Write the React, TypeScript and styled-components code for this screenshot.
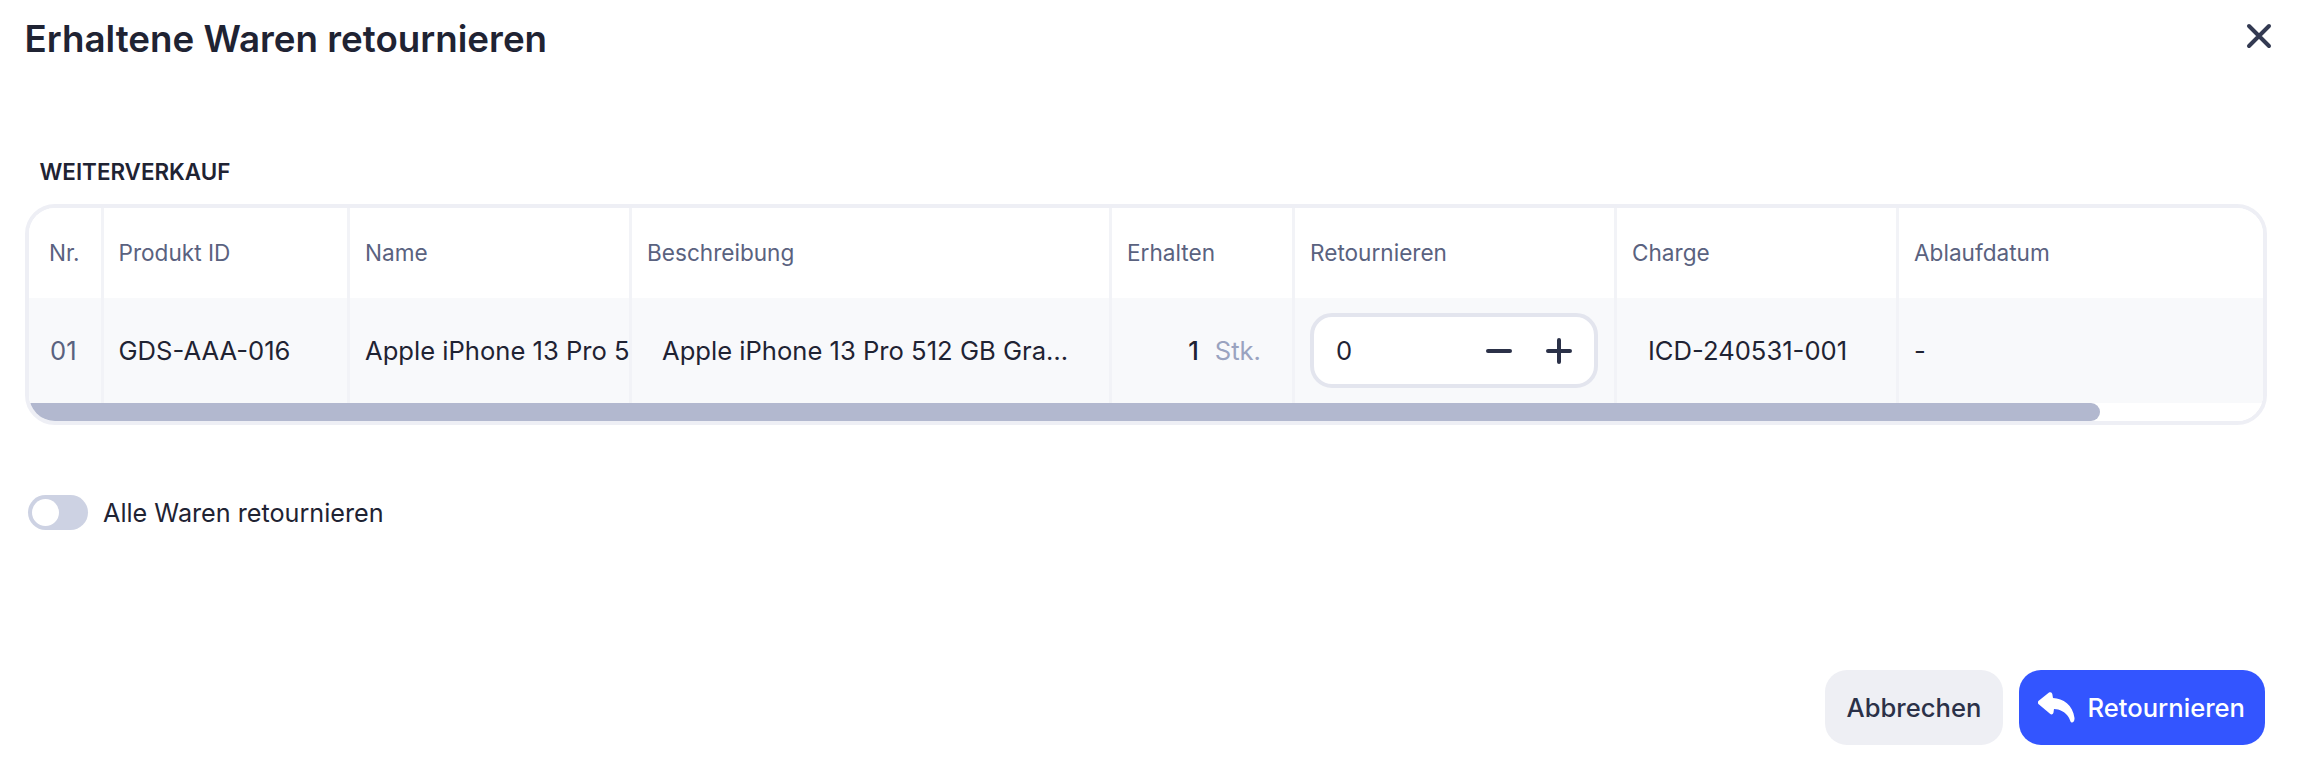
import React from "react";
import styled, { createGlobalStyle } from "styled-components";

const Global = createGlobalStyle`
  html, body { margin: 0; padding: 0; background: #fff; }
  body { font-family: Inter, "Liberation Sans", sans-serif; color: #1f2333; }
  * { box-sizing: border-box; }
`;

const Modal = styled.div`
  height: 766px;
  display: flex;
  flex-direction: column;
  padding: 0 37px 21px 25px;
`;
const Header = styled.header`
  height: 77px;
  display: flex;
  align-items: center;
  justify-content: space-between;
`;
const Title = styled.h1`
  margin: 0 0 0 -0.5px;
  font-size: 36.75px;
  font-weight: 600;
  color: #1f2333;
`;
const Close = styled.button`
  all: unset;
  width: 32px;
  height: 32px;
  margin: 0 -7.5px 6px 0;
  color: #333a52;
  display: flex;
  align-items: center;
  justify-content: center;
`;
const Section = styled.h2`
  margin: 79px 0 0 14.5px;
  height: 32px;
  line-height: 32px;
  font-size: 22.4px;
  font-weight: 600;
  color: #1f2333;
`;
const Frame = styled.div`
  margin-top: 16px;
  border: 4px solid #eeeff5;
  border-radius: 30px;
  overflow: hidden;
`;
const Scroller = styled.div`
  overflow: hidden;
`;
const Grid = styled.div`
  display: grid;
  width: 2412px;
  grid-template-columns: 74.5px 246.5px 282px 480px 183px 322px 282px 542px;
  grid-template-rows: 90px 105px;
`;
const Cell = styled.div<{ $pad?: number; $last?: boolean }>`
  display: flex;
  align-items: center;
  min-width: 0;
  padding: 0 0 0 ${(p) => p.$pad ?? 15}px;
  border-right: ${(p) => (p.$last ? "0" : "3.5px solid #f2f3f7")};
  white-space: nowrap;
  overflow: hidden;
`;
const HeadCell = styled(Cell)`
  font-size: 22.6px;
  color: #5a627f;
  background: #fff;
  padding-bottom: 2px;
`;
const BodyCell = styled(Cell)`
  font-size: 25.6px;
  color: #1f2333;
  background: #f8f9fb;
`;
const Faint = styled.span`
  color: #5a627f;
  margin-left: 1px;
`;
const Ellipsis = styled.span`
  display: block;
  width: 416px;
  overflow: hidden;
  text-overflow: ellipsis;
`;
const Qty = styled.div`
  width: 100%;
  display: flex;
  justify-content: flex-end;
  align-items: baseline;
  gap: 16px;
  padding-right: 31px;
`;
const Number1 = styled.span`
  font-weight: 500;
`;
const Unit = styled.span`
  color: #9aa3c0;
`;
const Stepper = styled.div`
  width: 288px;
  height: 75px;
  border: 4px solid #e3e5ee;
  border-radius: 22px;
  background: #fff;
  display: flex;
  align-items: center;
  padding: 0 20px 0 22px;
  font-size: 25.6px;
`;
const StepValue = styled.span`
  flex: 1;
`;
const StepButton = styled.button`
  all: unset;
  width: 30px;
  height: 30px;
  margin-left: 30px;
  color: #2b3148;
  display: flex;
  align-items: center;
  justify-content: center;
`;
const ScrollTrack = styled.div`
  height: 18px;
  background: #fff;
`;
const ScrollThumb = styled.div`
  width: 2071px;
  height: 100%;
  background: #b2b8cf;
  border-radius: 0 9px 9px 0;
`;
const ToggleRow = styled.label`
  margin: 70px 0 0 3px;
  display: flex;
  align-items: center;
  gap: 15px;
  font-size: 25.2px;
  color: #1f2333;
`;
const Track = styled.span`
  width: 60px;
  height: 35px;
  border-radius: 18px;
  background: #cdd2e3;
  padding: 4px;
  display: block;
`;
const Knob = styled.span`
  display: block;
  width: 27px;
  height: 27px;
  border-radius: 50%;
  background: #fff;
`;
const Footer = styled.footer`
  margin-top: auto;
  margin-right: 2px;
  display: flex;
  justify-content: flex-end;
  gap: 15.5px;
`;
const Button = styled.button<{ $primary?: boolean }>`
  all: unset;
  height: 75px;
  border-radius: 22px;
  display: flex;
  align-items: center;
  justify-content: center;
  gap: 12px;
  font-size: 25.6px;
  font-weight: 450;
  background: ${(p) => (p.$primary ? "#3355ff" : "#eeeff4")};
  color: ${(p) => (p.$primary ? "#fff" : "#2b3148")};
  width: ${(p) => (p.$primary ? 246.5 : 178)}px;
`;

const X = () => (
  <svg width="32" height="32" viewBox="0 0 32 32" fill="none" stroke="currentColor" strokeWidth="4" strokeLinecap="round">
    <path d="M6 6l20 20M26 6L6 26" />
  </svg>
);
const Minus = () => (
  <svg width="30" height="30" viewBox="0 0 30 30" fill="none" stroke="currentColor" strokeWidth="4" strokeLinecap="round">
    <path d="M4 15h22" />
  </svg>
);
const Plus = () => (
  <svg width="30" height="30" viewBox="0 0 30 30" fill="none" stroke="currentColor" strokeWidth="4" strokeLinecap="round">
    <path d="M4 15h22M15 4v22" />
  </svg>
);
const Reply = () => (
  <svg width="37" height="32" viewBox="0 0 37 32" fill="#fff">
    <path d="M1 8.500 11 .6c1.500-1 3-.3 3.300 1.500L15 6c10 .5 20 7 21.500 20 .2 3-1.500 5-3 4.500-1.500-.5-1.500-3.500-3-5.500-3-5-9-8-14.500-8l-.5 3.500c-.5 1.800-2 2.500-3.500 1.300L1 12.500c-1.500-1.300-1.500-2.800 0-4Z" />
  </svg>
);

export default function App() {
  return (
    <>
      <Global />
      <Modal>
        <Header>
          <Title>Erhaltene Waren retournieren</Title>
          <Close aria-label="Schließen"><X /></Close>
        </Header>
        <Section>WEITERVERKAUF</Section>
        <Frame>
          <Scroller>
            <Grid>
              <HeadCell $pad={20}>Nr.</HeadCell>
              <HeadCell>Produkt ID</HeadCell>
              <HeadCell>Name</HeadCell>
              <HeadCell>Beschreibung</HeadCell>
              <HeadCell>Erhalten</HeadCell>
              <HeadCell>Retournieren</HeadCell>
              <HeadCell>Charge</HeadCell>
              <HeadCell $last>Ablaufdatum</HeadCell>

              <BodyCell $pad={20}><Faint>01</Faint></BodyCell>
              <BodyCell>GDS-AAA-016</BodyCell>
              <BodyCell>Apple iPhone 13 Pro 512 GB Graphit</BodyCell>
              <BodyCell $pad={30}><Ellipsis>Apple iPhone 13 Pro 512 GB Graphit</Ellipsis></BodyCell>
              <BodyCell>
                <Qty><Number1>1</Number1><Unit>Stk.</Unit></Qty>
              </BodyCell>
              <BodyCell>
                <Stepper>
                  <StepValue>0</StepValue>
                  <StepButton aria-label="Weniger"><Minus /></StepButton>
                  <StepButton aria-label="Mehr"><Plus /></StepButton>
                </Stepper>
              </BodyCell>
              <BodyCell $pad={31}>ICD-240531-001</BodyCell>
              <BodyCell $last>-</BodyCell>
            </Grid>
          </Scroller>
          <ScrollTrack><ScrollThumb /></ScrollTrack>
        </Frame>
        <ToggleRow>
          <Track><Knob /></Track>
          Alle Waren retournieren
        </ToggleRow>
        <Footer>
          <Button>Abbrechen</Button>
          <Button $primary><Reply />Retournieren</Button>
        </Footer>
      </Modal>
    </>
  );
}
